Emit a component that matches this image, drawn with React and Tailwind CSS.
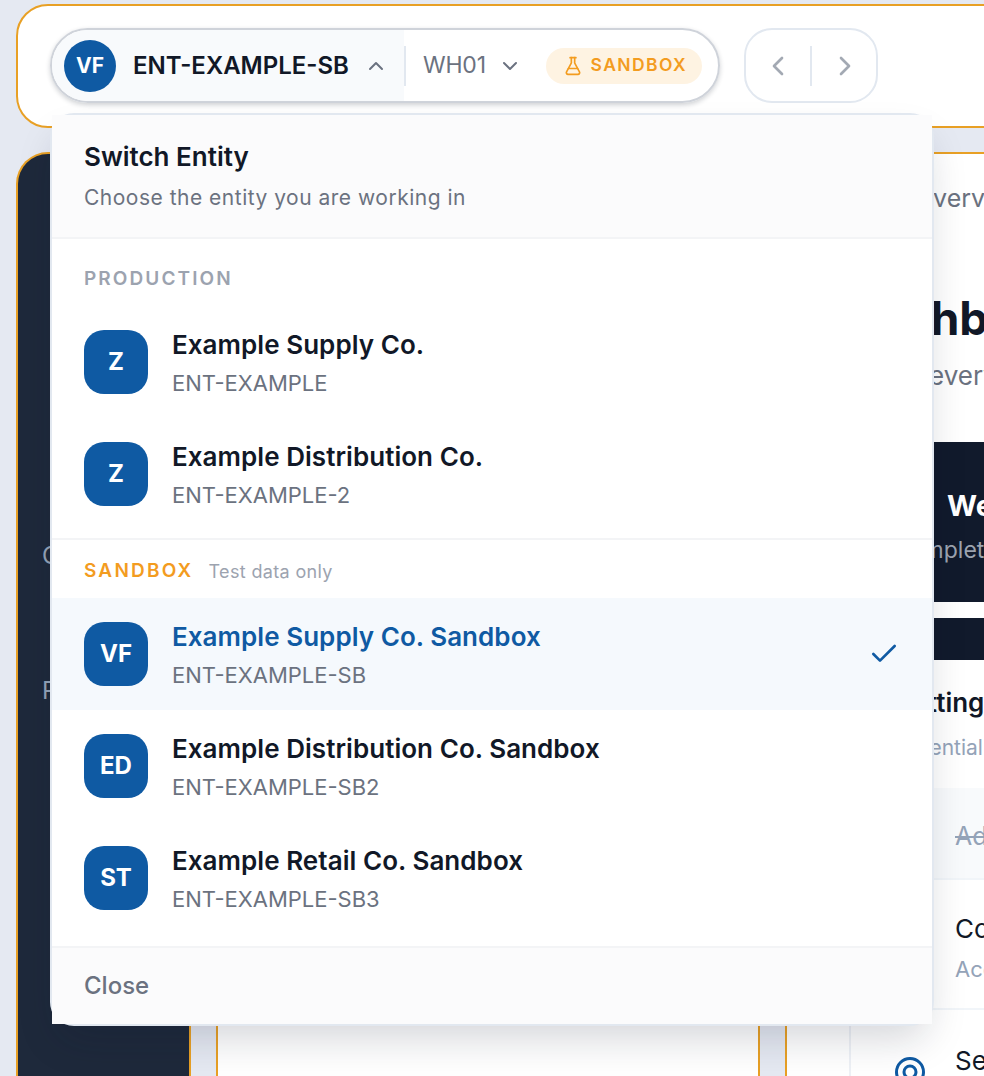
import React from 'react';
import { Check, ChevronDown, ChevronLeft, ChevronRight, ChevronUp, FlaskConical } from 'lucide-react';

const production = [
  { initials: 'Z', name: 'Example Supply Co.', code: 'ENT-EXAMPLE' },
  { initials: 'Z', name: 'Example Distribution Co.', code: 'ENT-EXAMPLE-2' },
];

const sandbox = [
  { initials: 'VF', name: 'Example Supply Co. Sandbox', code: 'ENT-EXAMPLE-SB', active: true },
  { initials: 'ED', name: 'Example Distribution Co. Sandbox', code: 'ENT-EXAMPLE-SB2' },
  { initials: 'ST', name: 'Example Retail Co. Sandbox', code: 'ENT-EXAMPLE-SB3' },
];

function EntityRow({ entity }) {
  return (
    <div className={`flex h-[112px] items-center gap-6 pl-8 ${entity.active ? 'bg-[#f5f9fd]' : ''}`}>
      <div className="flex h-16 w-16 shrink-0 items-center justify-center rounded-[20px] bg-[#0f5aa3] text-[24px] font-bold text-white">
        {entity.initials}
      </div>
      <div className="flex-1">
        <div className={`text-[26px] leading-[38px] font-semibold tracking-[0.05px] ${entity.active ? 'text-[#0f5aa3]' : 'text-[#111827]'}`}>
          {entity.name}
        </div>
        <div className="mt-[3px] text-[22px] leading-[32px] text-[#6b7280]">{entity.code}</div>
      </div>
      {entity.active && <Check className="mr-8 h-8 w-8 text-[#0f5aa3]" strokeWidth={2} />}
    </div>
  );
}

function EntityMenu() {
  return (
    <div className="absolute top-[113px] left-[50px] z-20 h-[913px] w-[884px] rounded-[24px] border-2 border-[#e2e8f0] bg-white shadow-[0_20px_40px_-8px_rgba(15,23,42,0.18)]">
      <div className="flex h-[124px] flex-col border-b-2 border-[#f3f4f6] bg-[#fbfbfc] px-8 pt-[23px]">
        <div className="text-[26px] leading-[38px] font-semibold text-[#111827]">Switch Entity</div>
        <div className="mt-[6px] text-[21px] leading-[32px] tracking-[0.5px] text-[#6b7280]">Choose the entity you are working in</div>
      </div>
      <div className="border-b-2 border-[#f3f4f6] bg-white pb-2">
        <div className="flex h-[67px] items-center px-8 pt-[13px] text-[19px] font-semibold tracking-[2.1px] text-[#9ca3af]">PRODUCTION</div>
        {production.map((entity) => (
          <EntityRow key={entity.code} entity={entity} />
        ))}
      </div>
      <div className="border-b-2 border-[#f3f4f6] bg-white pb-3">
        <div className="flex h-[58px] items-center gap-[15px] px-8 pt-[5px]">
          <span className="text-[19px] font-semibold tracking-[2.2px] text-[#f39c1f]">SANDBOX</span>
          <span className="text-[18px] tracking-[0.35px] text-[#9ca3af]">Test data only</span>
        </div>
        {sandbox.map((entity) => (
          <EntityRow key={entity.code} entity={entity} />
        ))}
      </div>
      <div className="flex h-[76px] items-center bg-[#fbfbfc] px-8 text-[24px] font-medium text-[#6b7280]">Close</div>
    </div>
  );
}

function TopBar() {
  return (
    <header className="mt-1 ml-4 flex h-[124px] w-[1100px] shrink-0 items-center gap-[24px] rounded-[32px] border-2 border-[#e8a025] bg-white pl-[32px]">
      <div className="mb-[1px] flex h-[75px] items-center overflow-hidden rounded-full border-2 border-[#cfd3da] shadow-[0_2px_5px_rgba(15,23,42,0.2)]">
        <div className="flex h-full w-[352px] items-center bg-[#f8fafc] pl-3">
          <div className="flex h-[52px] w-[52px] items-center justify-center rounded-full bg-[#0f5aa3] text-[21px] font-bold text-white">VF</div>
          <span className="ml-[17px] text-[24px] font-semibold text-[#111827]">ENT-EXAMPLE-SB</span>
          <ChevronUp className="ml-[15px] h-6 w-6 text-[#6b7280]" strokeWidth={2} />
        </div>
        <div className="h-10 w-[2px] bg-[#e2e8f0]" />
        <div className="flex h-full items-center pr-4">
          <span className="ml-[17px] text-[23px] tracking-[-0.2px] text-[#6b7280]">WH01</span>
          <ChevronDown className="ml-[12px] h-6 w-6 text-[#6b7280]" strokeWidth={2} />
          <div className="ml-6 flex h-9 w-[156px] items-center justify-center gap-2 rounded-full bg-[#fef3e2] pl-[2px] text-[17.5px] font-semibold tracking-[1.4px] text-[#f39c1f]">
            <FlaskConical className="h-5 w-5" strokeWidth={2} />
            SANDBOX
          </div>
        </div>
      </div>
      <div className="mb-[1px] flex h-[75px] w-[134px] items-center justify-between rounded-[28px] border-2 border-[#e2e8f0] pr-[15px] pl-[16px] text-[#a3a9b3]">
        <ChevronLeft className="h-8 w-8" strokeWidth={2} />
        <div className="h-10 w-[2px] bg-[#e2e8f0]" />
        <ChevronRight className="h-8 w-8" strokeWidth={2} />
      </div>
    </header>
  );
}

function Sidebar() {
  return (
    <aside className="flex w-[175px] shrink-0 flex-col rounded-tl-[32px] border-2 border-b-0 border-[#e8a025] bg-[#1e293b] pt-[384px] pl-[24px] text-[24px] text-[#94a3b8]">
      <div className="h-[135px]">Catalog</div>
      <div>Purchasing</div>
    </aside>
  );
}

function MainPanel() {
  return (
    <div className="w-[544px] shrink-0 border-2 border-b-0 border-[#e8a025] bg-white" />
  );
}

function DashboardPanel() {
  return (
    <section className="w-[700px] shrink-0 border-2 border-b-0 border-[#e8a025] bg-white pl-[62px]">
      <div className="pt-[26px] pl-[65px] text-[25px] leading-9 text-[#6b7280]">Overview</div>
      <h1 className="mt-[73px] -ml-1 text-[46px] leading-[58px] font-bold text-[#111827]">Dashboard</h1>
      <p className="mt-[13px] pl-[80px] text-[26px] leading-8 text-[#6b7280]">everything</p>
      <div className="mt-[50px] flex h-40 flex-col bg-[#111a2c] pt-[44px]">
        <div className="pl-[98px] text-[29px] leading-10 font-bold text-white">Welcome</div>
        <div className="mt-[8px] pl-[44px] text-[23px] leading-8 text-[#9ca3af]">Complete</div>
      </div>
      <div className="mt-4 h-[42px] bg-[#111a2c]" />
      <div className="mt-[25px] pl-[44px] text-[26px] leading-9 font-semibold text-[#111827]">Getting started</div>
      <div className="mt-[11px] pl-[46px] text-[21px] leading-8 text-[#94a3b8]">essential</div>
      <div className="mt-[24px] border-l-2 border-[#eef1f6]">
        <div className="flex h-[92px] items-center border-b-2 border-[#f1f5f9] bg-[#f8fafc] pt-2 pl-[104px]">
          <span className="text-[25px] text-[#94a3b8] line-through">Add</span>
        </div>
        <div className="h-[130px] border-b-2 border-[#f1f5f9] pt-[31px] pl-[104px]">
          <div className="text-[26px] leading-9 text-[#111827]">Connect</div>
          <div className="mt-[6px] text-[22px] leading-8 text-[#94a3b8]">Access</div>
        </div>
        <div className="flex gap-[30px] pt-[33px] pl-[44px]">
          <svg className="mt-[13px] h-[32px] w-[30px] shrink-0 text-[#0f5aa3]" viewBox="0 0 30 32" fill="none" stroke="currentColor" strokeWidth="3">
            <circle cx="15" cy="16" r="13.5" />
            <circle cx="15" cy="16" r="6" />
          </svg>
          <span className="text-[26px] leading-9 text-[#111827]">Set up</span>
        </div>
      </div>
    </section>
  );
}

export default function App() {
  return (
    <div className="relative flex h-[1076px] w-[984px] flex-col overflow-hidden bg-[#e5e9f2] font-['Inter',sans-serif]">
      <TopBar />
      <div className="mt-6 ml-4 flex flex-1 gap-[25px]">
        <Sidebar />
        <MainPanel />
        <DashboardPanel />
      </div>
      <EntityMenu />
    </div>
  );
}
